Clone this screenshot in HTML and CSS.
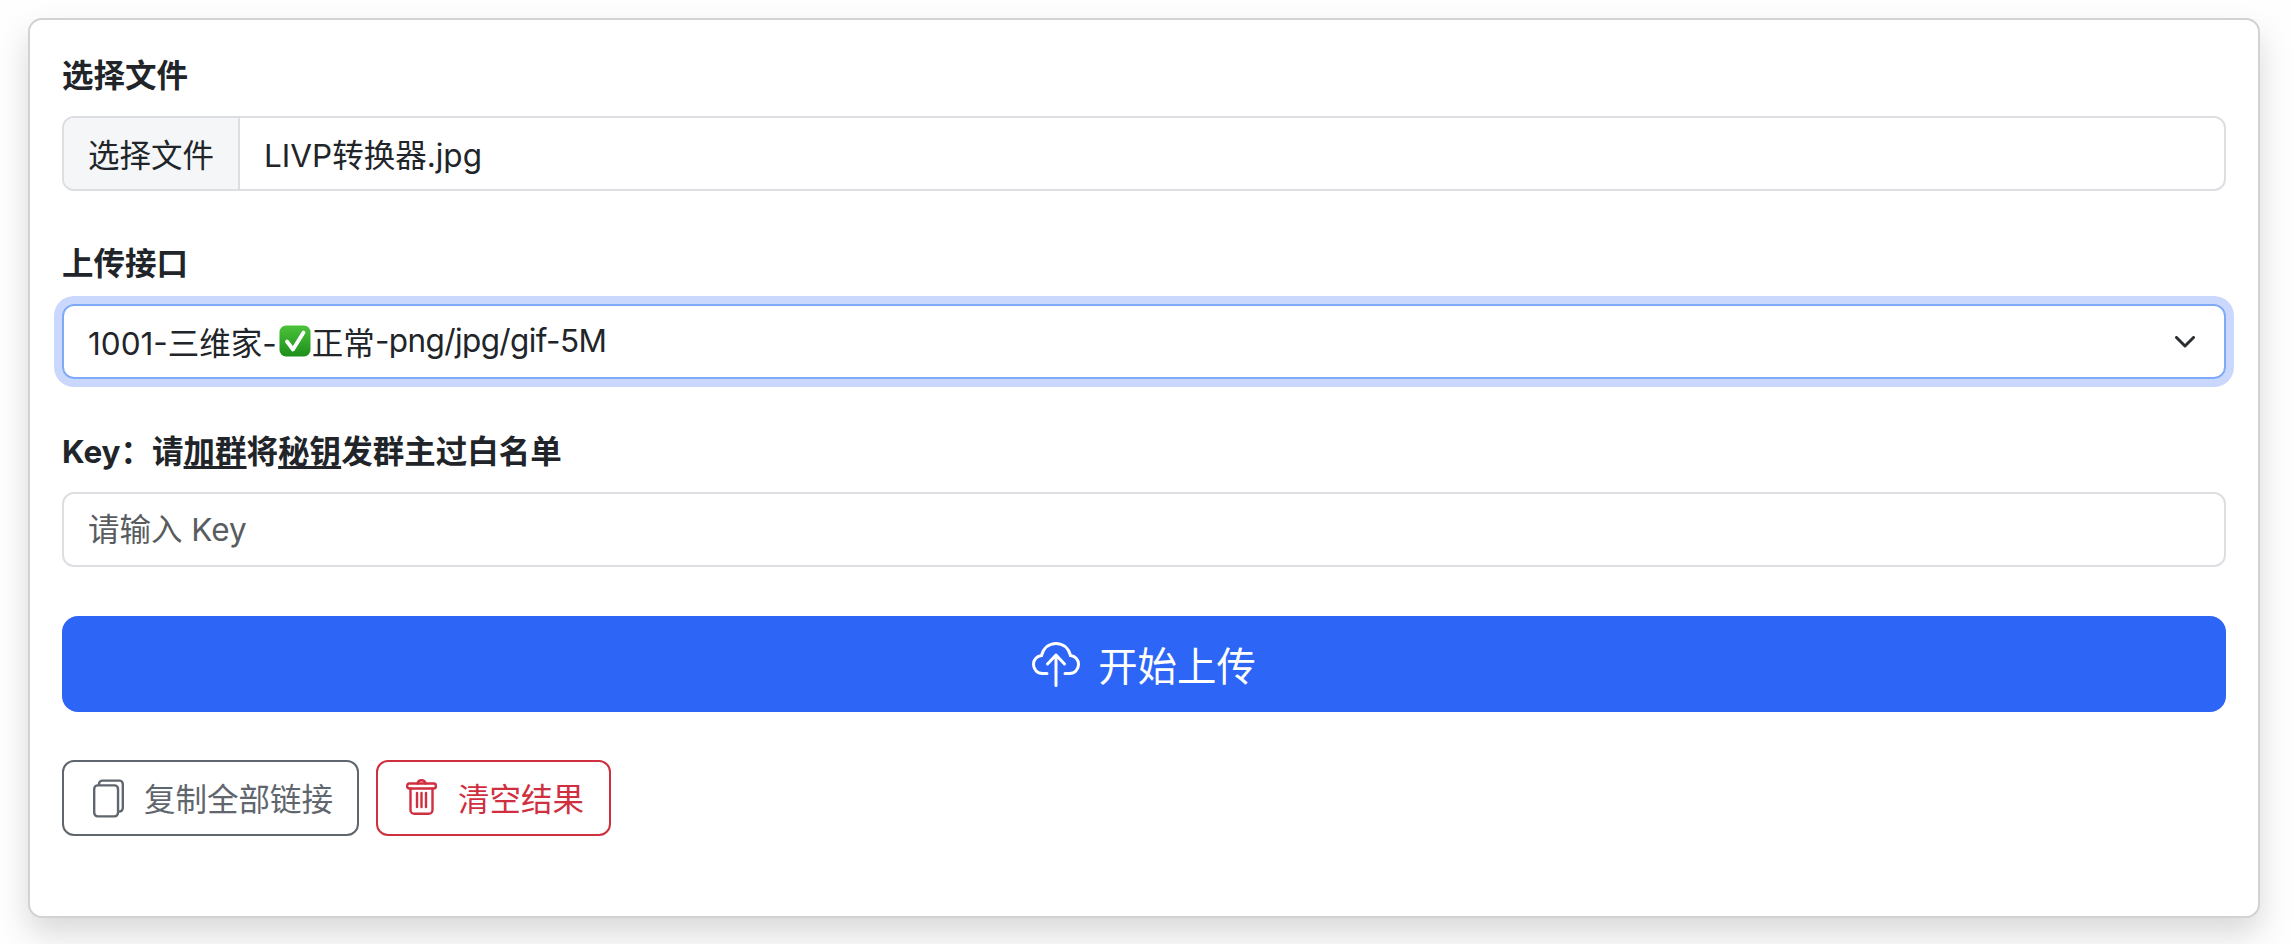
FILE: index.html
```html
<!DOCTYPE html>
<html lang="zh-CN">
<head>
<meta charset="utf-8">
<title>上传</title>
<link rel="stylesheet" href="styles.css">
</head>
<body>
<main class="card">
  <section class="group">
    <div class="label">选择文件</div>
    <div class="file-field">
      <span class="file-btn">选择文件</span>
      <span class="file-name">LIVP转换器.jpg</span>
    </div>
  </section>
  <section class="group">
    <div class="label">上传接口</div>
    <div class="select-field">
      <span class="select-text">1001-三维家-<svg class="emoji" viewBox="0 0 32 32"><defs><linearGradient id="g" x1="0" y1="0" x2="0" y2="1"><stop offset="0" stop-color="#4cc23a"/><stop offset="1" stop-color="#1d8f1c"/></linearGradient></defs><rect x="0.5" y="0.5" width="31" height="31" rx="6.5" fill="url(#g)"/><path d="M8 16.500l6 8L24.500 7.500" fill="none" stroke="#fff" stroke-width="3.800" stroke-linecap="round" stroke-linejoin="round"/></svg>正常<span class="tight">-png/jpg/gif-5M</span></span>
      <svg class="chevron" viewBox="0 0 20 12"><path d="M1.500 1.500L10 10l8.500-8.500" fill="none" stroke="#2b2f33" stroke-width="3" stroke-linecap="round" stroke-linejoin="round"/></svg>
    </div>
  </section>
  <section class="group">
    <div class="label">Key：请<a class="link">加群</a>将<a class="link">秘钥</a>发群主过白名单</div>
    <input class="text-input" type="text" placeholder="请输入 Key">
  </section>
  <button class="upload-btn" type="button">
    <svg class="cloud" viewBox="0 0 48 45"><path d="M15 31.500H10.500C5 31.500 1.500 27 1.500 22.500C1.500 17.500 5 14 9.500 13.500C11.500 6 17 1.500 24 1.500C31 1.500 36.500 6 38.500 13.500C43 14 46.500 17.500 46.500 22.500C46.500 27 43 31.500 37.500 31.500H33" fill="none" stroke="#fff" stroke-width="3" stroke-linecap="round"/><path d="M24 43.500V13M15.500 22L24 13l8.500 9" fill="none" stroke="#fff" stroke-width="3" stroke-linecap="round" stroke-linejoin="round"/></svg>
    <span class="upload-text">开始上传</span>
  </button>
  <div class="actions">
    <button class="action action-gray" type="button">
      <svg class="icon-copy" viewBox="2 0 13 16" fill="currentColor"><path d="M13 0H6a2 2 0 0 0-2 2 2 2 0 0 0-2 2v10a2 2 0 0 0 2 2h7a2 2 0 0 0 2-2 2 2 0 0 0 2-2V2a2 2 0 0 0-2-2m0 13V4a2 2 0 0 0-2-2H5a1 1 0 0 1 1-1h7a1 1 0 0 1 1 1v10a1 1 0 0 1-1 1M3 4a1 1 0 0 1 1-1h7a1 1 0 0 1 1 1v10a1 1 0 0 1-1 1H4a1 1 0 0 1-1-1z"/></svg>
      <span class="action-text">复制全部链接</span>
    </button>
    <button class="action action-red" type="button">
      <svg class="icon-trash" viewBox="0 0 31 36" fill="none" stroke="currentColor" stroke-width="2.400" stroke-linecap="round" stroke-linejoin="round"><path d="M11.500 4.500C12 2 13.500 1.200 15.500 1.200S19 2 19.500 4.500"/><rect x="1.200" y="4.500" width="28.600" height="5" rx="2"/><path d="M4.500 9.500V31a3.800 3.800 0 0 0 3.800 3.800h14.400a3.800 3.800 0 0 0 3.800-3.800V9.500"/><path d="M11 14v14M15.500 14v14M20 14v14"/></svg>
      <span class="action-text">清空结果</span>
    </button>
  </div>
</main>
</body>
</html>
```
FILE: styles.css
```css
* { box-sizing: border-box; }
html, body { margin: 0; background: #fefefe; }
body {
  padding: 18px 32px 26px 28px;
  font-family: Inter, "Noto Sans CJK SC", sans-serif;
  font-size: 31.5px;
  color: #212529;
  overflow: hidden;
}
.card {
  height: 900px;
  padding: 32px;
  background: #fff;
  border: 2px solid #d2d2d2;
  border-radius: 14px;
  box-shadow: 0 16px 32px rgba(0, 0, 0, .15);
}
.group { margin-bottom: 49px; }
.label {
  height: 47px;
  margin-bottom: 17px;
  line-height: 47px;
  font-weight: 700;
  color: #212529;
}
.link { text-decoration: underline; text-underline-offset: 3px; }
.file-field {
  display: flex;
  height: 75px;
  border: 2px solid #dcdee2;
  border-radius: 12px;
  overflow: hidden;
}
.file-btn {
  display: flex;
  align-items: center;
  padding: 0 24px 2px;
  background: #f5f6f8;
  border-right: 2px solid #dcdee2;
}
.file-name { display: flex; align-items: center; padding: 0 0 2px 24px; }
.select-field {
  display: flex;
  align-items: center;
  justify-content: space-between;
  height: 75px;
  padding: 0 29px 0 24px;
  border: 2px solid #7eaaf8;
  border-radius: 12px;
  box-shadow: 0 0 0 8px #cad8fd;
}
.select-text { display: flex; align-items: center; padding-bottom: 2px; }
.tight { letter-spacing: -0.6px; }
.emoji { width: 32px; height: 32px; flex: none; margin: 0 1px 0 2px; }
.chevron { width: 20px; height: 12px; }
.text-input {
  display: block;
  width: 100%;
  height: 75px;
  padding: 0 24px;
  border: 2px solid #dcdee2;
  border-radius: 12px;
  font: inherit;
  color: #212529;
  outline: none;
}
.text-input::placeholder { color: #595c5f; opacity: 1; }
.upload-btn {
  display: flex;
  align-items: center;
  justify-content: center;
  gap: 18px;
  width: 100%;
  height: 96px;
  margin-bottom: 48px;
  border: 0;
  border-radius: 16px;
  background: #2d66f6;
  color: #fff;
  font-family: inherit;
  font-size: 39.4px;
}
.upload-text { padding-bottom: 2px; }
.cloud { width: 48px; height: 45px; }
.actions { display: flex; gap: 17px; }
.action {
  display: flex;
  align-items: center;
  height: 76px;
  border: 2px solid currentColor;
  border-radius: 12px;
  background: #fff;
  font: inherit;
}
.action-text { padding-bottom: 2px; }
.action-gray { color: #5f666d; gap: 20px; padding: 0 24px 0 29px; }
.action-red { color: #cf2f3f; gap: 21px; padding: 0 25px 0 28px; }
.icon-copy { width: 31px; height: 39px; }
.icon-trash { width: 31px; height: 36px; margin-top: -3px; }
```
